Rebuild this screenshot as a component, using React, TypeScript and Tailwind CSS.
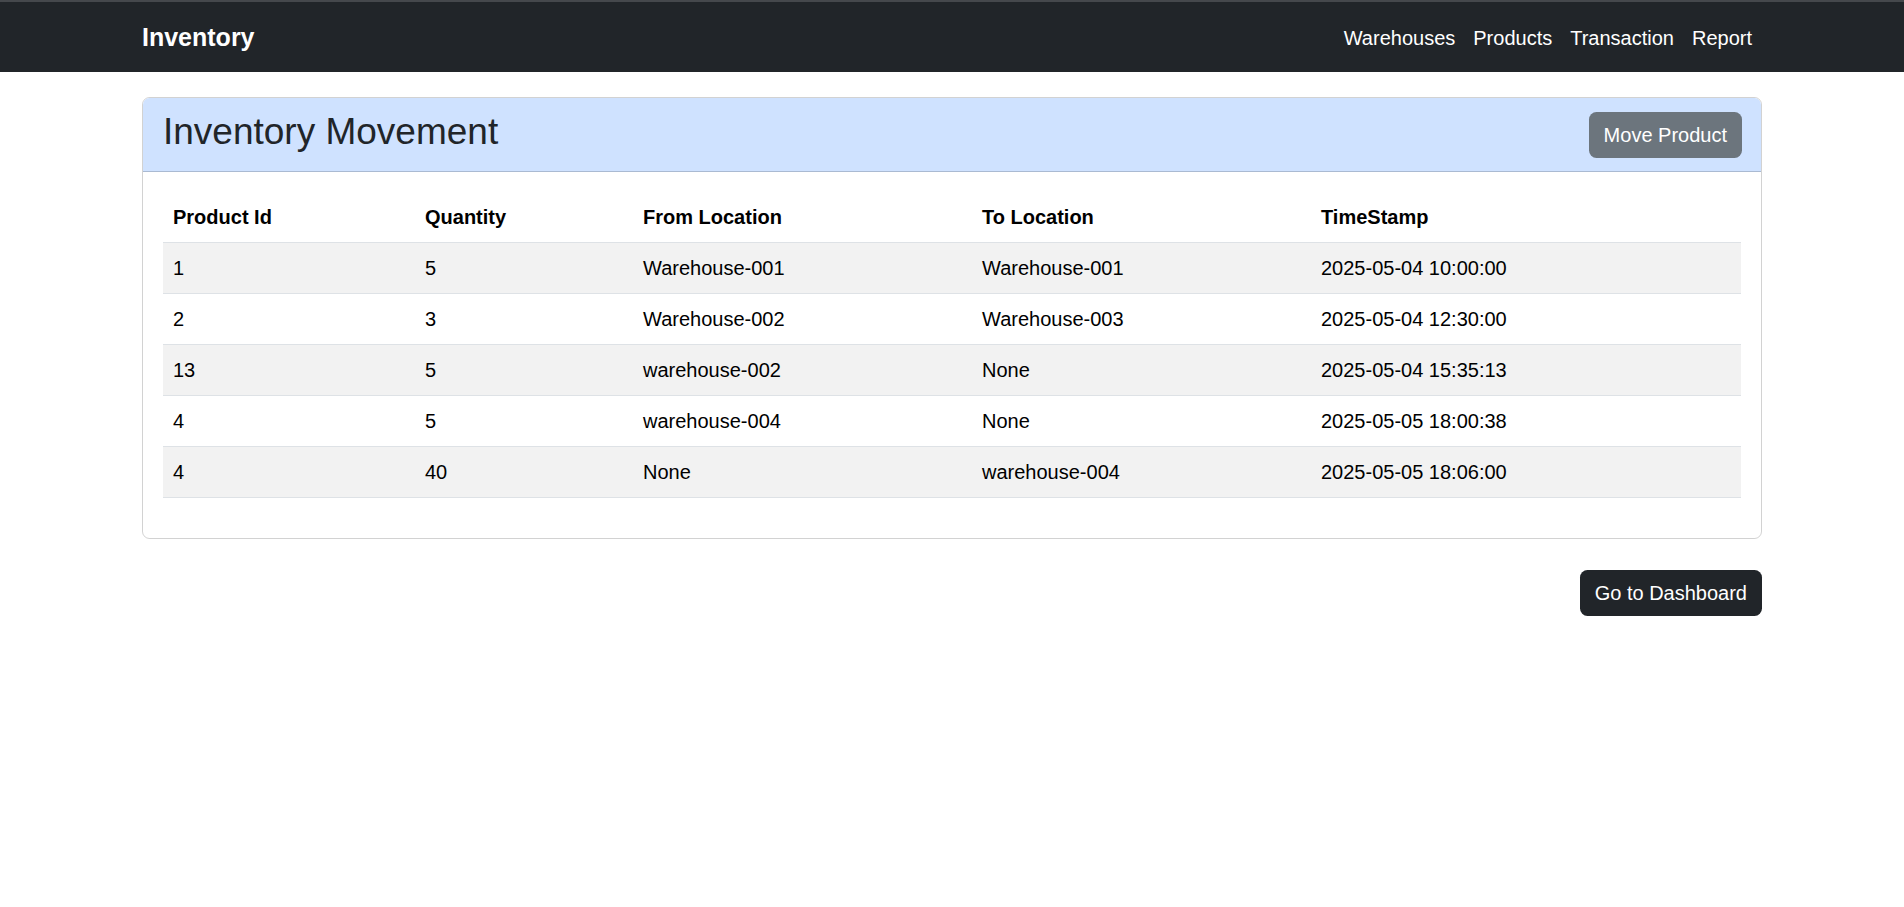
import React from 'react';

interface Movement {
  productId: string;
  quantity: string;
  from: string;
  to: string;
  timestamp: string;
}

const movements: Movement[] = [
  { productId: '1', quantity: '5', from: 'Warehouse-001', to: 'Warehouse-001', timestamp: '2025-05-04 10:00:00' },
  { productId: '2', quantity: '3', from: 'Warehouse-002', to: 'Warehouse-003', timestamp: '2025-05-04 12:30:00' },
  { productId: '13', quantity: '5', from: 'warehouse-002', to: 'None', timestamp: '2025-05-04 15:35:13' },
  { productId: '4', quantity: '5', from: 'warehouse-004', to: 'None', timestamp: '2025-05-05 18:00:38' },
  { productId: '4', quantity: '40', from: 'None', to: 'warehouse-004', timestamp: '2025-05-05 18:06:00' },
];

const navLinks = ['Warehouses', 'Products', 'Transaction', 'Report'];

const App: React.FC = () => {
  return (
    <div className="min-h-screen bg-white text-[#212529] font-['Liberation_Sans',Arial,sans-serif]">
      {/* Navbar */}
      <nav className="bg-[#212529] border-t-2 border-[#45484c]">
        <div className="w-[1650px] mx-auto px-[15px] h-[70px] pt-[2px] flex items-center justify-between">
          <a href="#" className="text-white text-[25px] font-bold leading-[37.5px] py-[6px]">
            Inventory
          </a>
          <div className="flex items-center">
            {navLinks.map((link) => (
              <a key={link} href="#" className="text-white text-[20px] leading-[30px] px-[9px] py-[10px] last:pr-[10px]">
                {link}
              </a>
            ))}
          </div>
        </div>
      </nav>

      {/* Main Content */}
      <div className="w-[1650px] mx-auto px-[15px]">
        <div className="mt-[25px] border border-black/[.175] rounded-[7.5px] overflow-hidden">
          {/* Card Header */}
          <div className="bg-[#cfe2ff] border-b border-black/[.175] h-[74px] px-[20px] flex items-center justify-between">
            <h2 className="text-[37px] leading-[44px] font-normal mb-[6px]">Inventory Movement</h2>
            <button className="bg-[#6c757d] text-white text-[20px] leading-[30px] px-[15px] py-[8px] rounded-[7.5px] -mr-[1px]">
              Move Product
            </button>
          </div>

          {/* Card Body */}
          <div className="p-[20px]">
            <table className="w-full table-fixed border-collapse text-black text-[20px] leading-[30px] mb-[20px]">
              <colgroup>
                <col className="w-[252px]" />
                <col className="w-[218px]" />
                <col className="w-[339px]" />
                <col className="w-[339px]" />
                <col />
              </colgroup>
              <thead>
                <tr className="border-b border-[#dee2e6]">
                  <th className="text-left font-bold px-[10px] py-[10px]">Product Id</th>
                  <th className="text-left font-bold px-[10px] py-[10px]">Quantity</th>
                  <th className="text-left font-bold px-[10px] py-[10px]">From Location</th>
                  <th className="text-left font-bold px-[10px] py-[10px]">To Location</th>
                  <th className="text-left font-bold px-[10px] py-[10px]">TimeStamp</th>
                </tr>
              </thead>
              <tbody>
                {movements.map((m, idx) => (
                  <tr
                    key={`${m.productId}-${idx}`}
                    className={`border-b border-[#dee2e6] ${idx % 2 === 0 ? 'bg-[#f2f2f2]' : 'bg-white'}`}
                  >
                    <td className="px-[10px] py-[10px]">{m.productId}</td>
                    <td className="px-[10px] py-[10px]">{m.quantity}</td>
                    <td className="px-[10px] py-[10px]">{m.from}</td>
                    <td className="px-[10px] py-[10px]">{m.to}</td>
                    <td className="px-[10px] py-[10px]">{m.timestamp}</td>
                  </tr>
                ))}
              </tbody>
            </table>
          </div>
        </div>

        <div className="mt-[31px] flex justify-end">
          <button className="bg-[#212529] text-white text-[20px] leading-[30px] px-[15px] py-[8px] rounded-[7.5px]">
            Go to Dashboard
          </button>
        </div>
      </div>
    </div>
  );
};

export default App;
